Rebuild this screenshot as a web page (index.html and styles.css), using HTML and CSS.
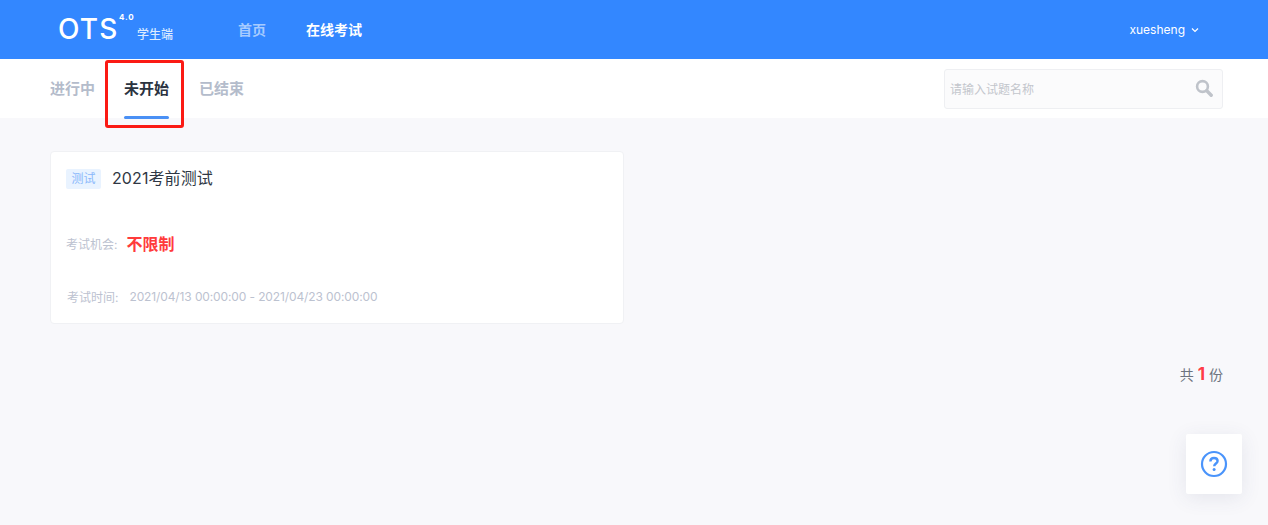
FILE: index.html
```html
<!DOCTYPE html>
<html lang="zh-CN">
<head>
  <meta charset="UTF-8" />
  <title>OTS 学生端</title>
  <link rel="stylesheet" href="styles.css">
</head>
<body>
  <header class="topbar">
    <div class="logo">
      <span class="logo-name">OTS</span>
      <span class="logo-version">4.0</span>
      <span class="logo-sub">学生端</span>
    </div>
    <nav class="nav">
      <a class="nav-item">首页</a>
      <a class="nav-item active">在线考试</a>
    </nav>
    <div class="user">
      xuesheng
      <svg class="caret" width="8" height="6" viewBox="0 0 8 6"><path d="M1 1.5 L4 4.5 L7 1.5" fill="none" stroke="#fff" stroke-width="1.2"/></svg>
    </div>
  </header>

  <section class="tabbar">
    <div class="tabs">
      <a class="tab first">进行中</a>
      <a class="tab current">未开始<span class="tab-mark"></span></a>
      <a class="tab">已结束</a>
      <span class="highlight"></span>
    </div>
    <div class="search">
      <span class="search-text">请输入试题名称</span>
      <svg width="18" height="18" viewBox="0 0 18 18"><circle cx="7.5" cy="7.5" r="5.4" fill="none" stroke="#bfc3ca" stroke-width="2.6"/><path d="M11.8 11.8 L16.2 16.2" stroke="#bfc3ca" stroke-width="3.4" stroke-linecap="round"/></svg>
    </div>
  </section>

  <main class="content">
    <div class="card">
      <div class="card-title">
        <span class="tag">测试</span>
        <span class="title">2021考前测试</span>
      </div>
      <div class="chance">
        <span class="label">考试机会:</span>
        <span class="chance-value">不限制</span>
      </div>
      <div class="time">
        <span class="label">考试时间:</span>
        <span class="time-value">2021/04/13 00:00:00 - 2021/04/23 00:00:00</span>
      </div>
    </div>
    <div class="total">共 <b>1</b> 份</div>
  </main>

  <div class="help">
    <svg width="28" height="28" viewBox="0 0 28 28"><circle cx="14" cy="14" r="12" fill="none" stroke="#4a94fb" stroke-width="2.2"/><path d="M10.4 11.4 C10.4 9.2 12 8 14 8 C16.1 8 17.6 9.3 17.6 11.1 C17.6 13.4 14.2 13.7 14.2 16.2" fill="none" stroke="#4a94fb" stroke-width="2.4"/><circle cx="14.1" cy="19.6" r="1.5" fill="#4a94fb"/></svg>
  </div>
</body>
</html>
```

FILE: styles.css
```css
* {
  box-sizing: border-box;
}

html,
body {
  height: 100%;
}

body {
  margin: 0;
  background-color: #f8f8fb;
  color: #333;
  font-family: "Inter", "Noto Sans CJK SC", sans-serif;
  overflow: hidden;
}

.topbar {
  height: 59px;
  background-color: #3387ff;
  display: flex;
  align-items: center;
  padding: 0 69px 0 58px;
  color: #fff;
}

.logo {
  position: relative;
  width: 180px;
  height: 59px;
}

.logo-name {
  position: absolute;
  left: 0;
  top: 12px;
  font-size: 28px;
  line-height: 34px;
  font-weight: 500;
  letter-spacing: 1.2px;
}

.logo-version {
  position: absolute;
  left: 61px;
  top: 13px;
  font-size: 8px;
  line-height: 8px;
  font-weight: 700;
  letter-spacing: 0.8px;
}

.logo-sub {
  position: absolute;
  left: 79px;
  top: 26px;
  font-size: 12px;
  line-height: 17px;
  font-weight: 500;
  color: #dcebff;
}

.nav {
  display: flex;
  gap: 40px;
  flex: 1;
}

.nav-item {
  font-size: 14px;
  line-height: 20px;
  font-weight: 700;
  color: #a6cbff;
}

.nav-item.active {
  color: #fff;
}

.user {
  display: flex;
  align-items: center;
  gap: 6px;
  font-size: 12px;
  color: #fff;
}

.tabbar {
  height: 59px;
  background-color: #fff;
  display: flex;
  align-items: center;
  justify-content: space-between;
  padding: 0 45px 0 50px;
}

.tabs {
  position: relative;
  display: flex;
  gap: 30px;
  height: 59px;
  align-items: center;
}

.tab {
  position: relative;
  font-size: 15px;
  line-height: 55px;
  font-weight: 700;
  color: #b4bccb;
}

.tab.first {
  margin-right: -1px;
}

.tab.current {
  color: #2b3340;
}

.tab-mark {
  position: absolute;
  left: 0;
  right: 0;
  bottom: -3px;
  height: 3px;
  border-radius: 2px;
  background-color: #4a90f5;
}

.highlight {
  position: absolute;
  left: 55px;
  top: 1px;
  width: 79px;
  height: 68px;
  border: 3px solid #fb1a14;
  border-radius: 3px;
}

.search {
  width: 279px;
  height: 40px;
  margin-top: 1px;
  background-color: #fbfbfc;
  border: 1px solid #eeeff2;
  border-radius: 3px;
  display: flex;
  align-items: center;
  justify-content: space-between;
  padding: 0 9px 2px 5px;
}

.search-text {
  font-size: 12px;
  color: #c3c6cc;
}

.content {
  padding: 33px 45px 0 50px;
}

.card {
  width: 574px;
  height: 173px;
  background-color: #fff;
  border: 1px solid #f0f1f4;
  border-radius: 4px;
  padding: 15px 15px 0;
}

.card-title {
  display: flex;
  align-items: center;
  gap: 11px;
  height: 23px;
}

.tag {
  width: 35px;
  height: 20px;
  border-radius: 2px;
  background-color: #e9f3ff;
  color: #8ab8fb;
  font-size: 12px;
  line-height: 20px;
  text-align: center;
}

.title {
  margin-bottom: 2px;
  font-size: 16px;
  line-height: 22px;
  letter-spacing: 0.1px;
  color: #2f3744;
}

.chance {
  display: flex;
  align-items: center;
  gap: 9px;
  margin-top: 41px;
  height: 24px;
}

.label {
  font-size: 12px;
  color: #bcc2d0;
}

.chance-value {
  font-size: 16px;
  font-weight: 700;
  color: #ff3b3b;
}

.time {
  display: flex;
  align-items: center;
  gap: 11px;
  margin-top: 32px;
  height: 18px;
  padding-left: 1px;
}

.time-value {
  font-size: 12px;
  letter-spacing: -0.12px;
  color: #bcc2d0;
}

.total {
  margin-top: 40px;
  text-align: right;
  font-size: 14px;
  line-height: 20px;
  color: #6d7480;
}

.total b {
  font-size: 17px;
  color: #ff3b47;
}

.help {
  position: absolute;
  left: 1186px;
  top: 434px;
  width: 56px;
  height: 60px;
  background-color: #fff;
  border-radius: 2px;
  box-shadow: 0 4px 20px rgba(60, 70, 110, 0.1);
  display: flex;
  align-items: center;
  justify-content: center;
}
```
